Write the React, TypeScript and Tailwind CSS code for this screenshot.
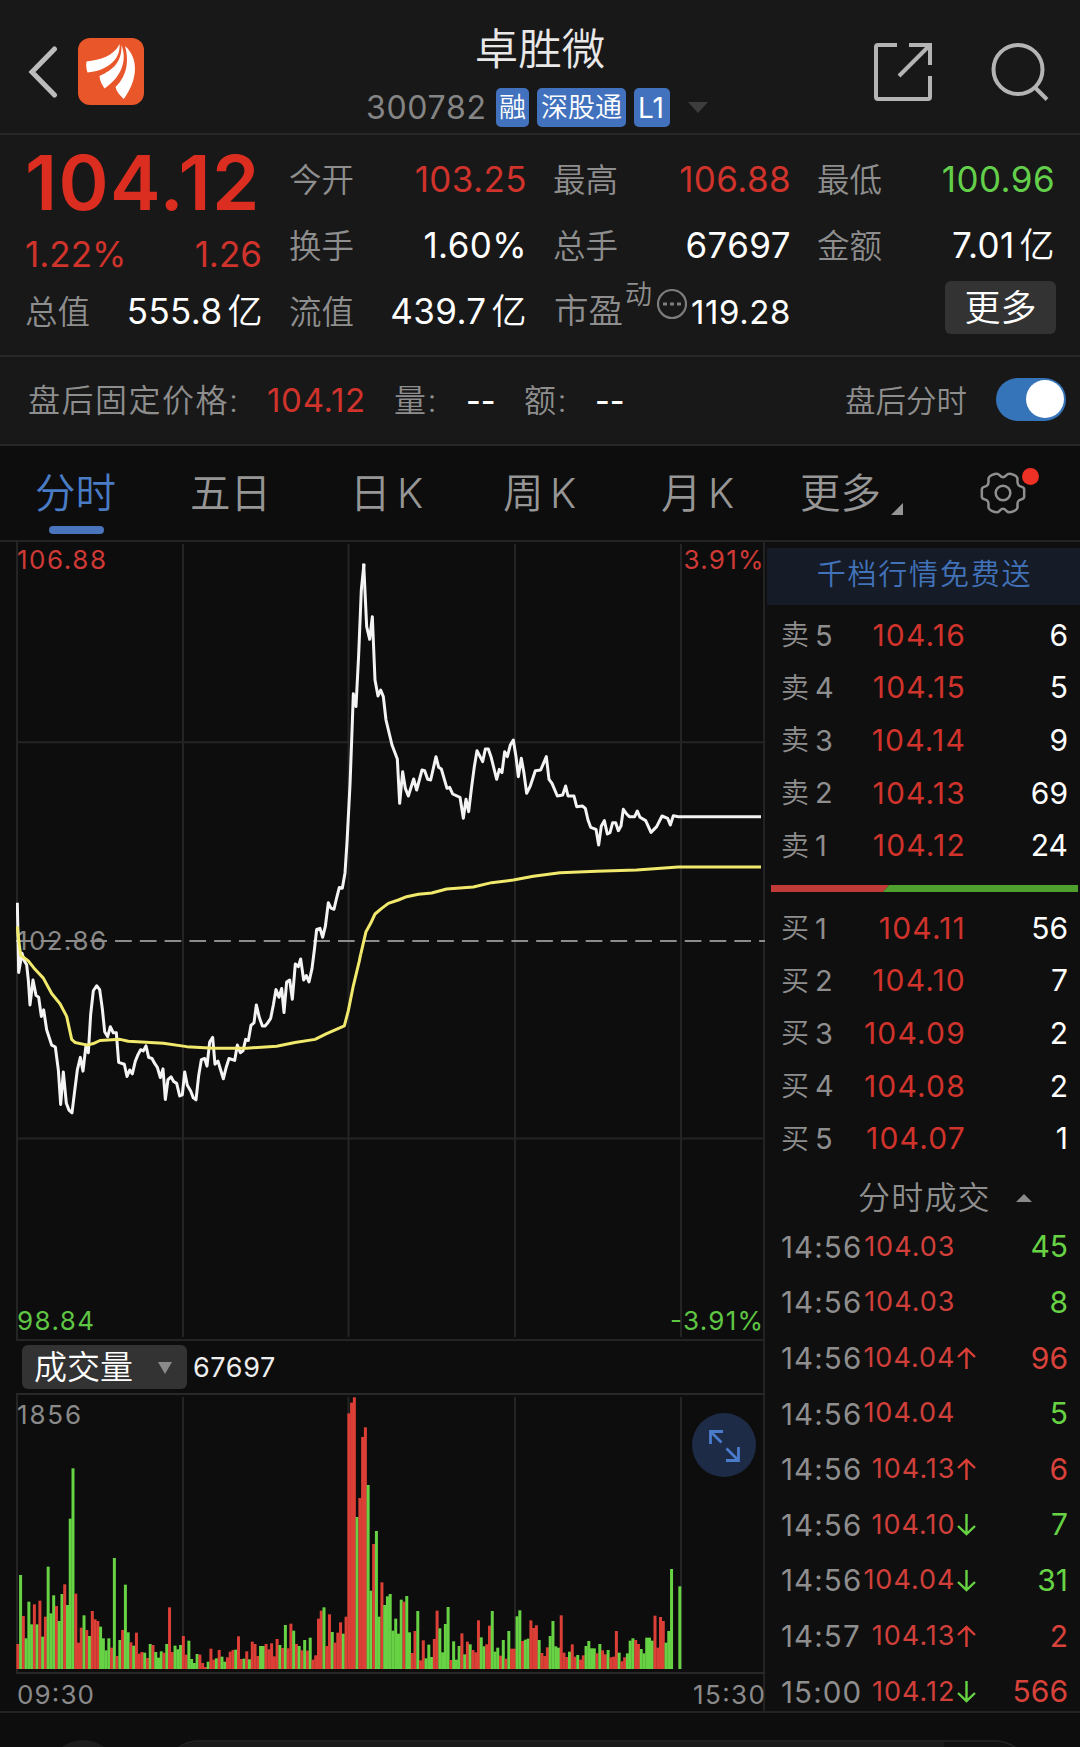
import { FC, ReactNode } from "react";

const RED = "#dc3f36";
const GREEN = "#67d344";

const priceEarly =
  "52,948 56,1130 66,1080 72,1098 80,1110 85,1150 90,1215 99,1150 108,1190 116,1195 124,1245 131,1228 140,1280 155,1320 166,1325 175,1385 182,1475 190,1390 199,1472 207,1490 216,1497 224,1440 232,1385 241,1352 249,1388 258,1320 265,1340 272,1240 280,1178 290,1165 299,1175 307,1225 314,1285 323,1298 331,1272 340,1288 349,1288 356,1365 373,1370 381,1402 389,1385 397,1395 406,1362 414,1345 422,1332 430,1335 438,1322 446,1352 456,1355 464,1368 472,1378 481,1405 489,1382 496,1462 504,1410 513,1403 521,1415 530,1420 539,1453 547,1450 554,1390 562,1425 572,1440 580,1458 588,1463 596,1400 604,1358 614,1355 621,1375 629,1312 638,1300 645,1370 654,1362 662,1385 670,1408 678,1380 687,1355 704,1360 712,1320 721,1340 729,1335 737,1305 745,1308 753,1268 762,1262 769,1215 778,1248 787,1270 795,1270 803,1262 812,1250 820,1215 828,1175 837,1195 845,1172 852,1235 860,1155 869,1150 877,1200 886,1108 895,1115 902,1095 911,1150 919,1138 927,1155 936,1120 944,1065 950,1018 960,1015 968,1038 976,1010 985,948 993,962 1002,965 1010,935 1018,908 1027,910 1035,870 1041,790 1050,640 1056,500 1060,402 1068,435 1076,300 1084,130 1092,62";
const priceLate =
  "101,71 110,260 119,298 127,230 135,420 144,468 152,450 160,470 168,540 186,615 202,657 209,790 218,695 226,745 235,768 251,717 260,750 276,690 284,692 293,718 302,720 318,650 326,682 334,687 351,745 359,742 368,762 390,772 400,835 408,778 416,815 425,740 433,680 441,632 458,665 466,627 475,627 483,650 500,718 508,688 516,698 524,635 532,650 541,615 550,600 558,650 565,710 574,655 582,700 590,760 600,740 616,692 632,690 649,650 657,718 666,730 682,768 698,765 707,738 714,768 732,768 740,800 757,798 766,805 774,840 782,862 798,868 806,915 814,858 823,842 832,882 840,878 848,848 857,848 865,872 873,858 880,808 890,822 898,830 914,830 922,813 930,832 947,842 963,877 980,860 996,828 1013,835 1021,855 1030,827 1045,830 1293,830";
const avgEarly =
  "52,1010 56,1045 62,1085 85,1100 105,1122 130,1145 155,1185 180,1212 200,1245 215,1305 225,1313 262,1320 280,1316 300,1308 360,1305 385,1310 490,1315 560,1324 640,1328 740,1328 830,1323 885,1313 945,1305 980,1290 1033,1270 1045,1230 1060,1165 1078,1100 1082,1083";
const avgLate =
  "92,1244 108,1175 122,1150 135,1122 155,1105 175,1090 205,1080 230,1070 265,1063 305,1059 350,1047 430,1041 485,1028 550,1020 610,1009 690,998 800,994 920,990 1045,981 1293,981";

// one entry per minute: direction + top of the bar, "-" is an empty minute
const volumeBars =
  "r1062 g855 r978 g1045 g935 g1003 r943 g1003 r932 g1040 r980 g830 g970 g916 r948 g993 g912 r883 g945 g686 g535 r911 r1058 r1013 g976 r1020 g1038 r963 r988 r993 g1010 g1045 g1081 g1045 r1073 g804 r1098 g1050 r1020 g884 g1027 r1057 g1067 r1028 r1091 r1086 g1088 r1104 g1062 r1065 g1086 g1103 g1084 r1088 g1062 r952 r1086 g1067 g1078 g1065 r1038 r1094 g1052 g1107 g1119 g1092 r1094 r1119 r1131 g1115 r1076 r1109 g1105 r1080 g1100 g1115 r1102 r1085 r1080 g1079 r1039 r1107 g1106 r1084 g1108 r1055 r1062 r1098 g1068 g1068 r1062 r1078 r1060 r1099 r1047 g1065 r1074 g1005 r1075 r1001 g1022 r1062 g1068 r1081 g1050 r1082 g1043 r1109 r1096 r986 r962 g952 r1068 r973 g1026 r1058 r1028 r997 g1031 r980 r370 r338 r322 g681 r624 r441 r412 g585 g902 r762 g723 g980 r877 g945 g919 g912 g1022 g986 g1031 g929 r935 g918 g1027 r1089 r1023 g963 r1111 r1051 g1105 g1064 g1101 r1047 r962 g1015 g1087 g1002 g951 r1110 g1054 g1109 g1068 r1030 g1093 r1055 g1063 r1080 r1087 r991 g1042 g1069 r1063 r1007 g963 g1085 g1073 r1097 g1050 r1106 g1023 r1076 r1076 g979 g961 r1053 g1049 g1046 r991 r1014 r1006 g1050 r1089 r1098 r1072 g1038 g993 g1069 g1073 r976 r1088 r1101 g1085 r1063 r1100 g1095 r1109 r1096 g1068 g1053 g1075 g1075 r1090 g1062 r1081 r1093 g1080 r1102 r1100 r1023 g1088 r1114 r1102 g1090 g1052 g1045 r1050 r1062 g1077 g1090 g1043 g1043 g1052 r977 r1073 r981 r993 g1058 g1023 g837 - - g889".split(" ");

const sells = [
  ["5", "104.16", "6"],
  ["4", "104.15", "5"],
  ["3", "104.14", "9"],
  ["2", "104.13", "69"],
  ["1", "104.12", "24"],
];

const buys = [
  ["1", "104.11", "56"],
  ["2", "104.10", "7"],
  ["3", "104.09", "2"],
  ["4", "104.08", "2"],
  ["5", "104.07", "1"],
];

const trades = [
  { time: "14:56", price: "104.03", dir: "", qty: "45", up: false },
  { time: "14:56", price: "104.03", dir: "", qty: "8", up: false },
  { time: "14:56", price: "104.04", dir: "up", qty: "96", up: true },
  { time: "14:56", price: "104.04", dir: "", qty: "5", up: false },
  { time: "14:56", price: "104.13", dir: "up", qty: "6", up: true },
  { time: "14:56", price: "104.10", dir: "down", qty: "7", up: false },
  { time: "14:56", price: "104.04", dir: "down", qty: "31", up: false },
  { time: "14:57", price: "104.13", dir: "up", qty: "2", up: true },
  { time: "15:00", price: "104.12", dir: "down", qty: "566", up: true },
];

const Header: FC = () => (
  <header className="flex h-[135px] shrink-0 items-start justify-between border-b-2 border-[#272727]">
    <div className="flex w-[300px] items-center gap-5 pt-[38px] pl-[28px]">
      <svg className="h-[52px] w-[30px]" viewBox="0 0 30 52" fill="none" stroke="#bcbcbc" strokeWidth="5">
        <path d="M26.5 3 4 26 26.5 49" strokeLinecap="round" />
      </svg>
      <svg className="h-[67px] w-[66px]" viewBox="0 0 66 67">
        <rect width="66" height="67" rx="12" fill="#e8562a" />
        <path fill="#fff" d="M8.5 23.5C22 22 36 18 41.5 6C43 22 28 33 9.5 34.5C8 30 8 27 8.5 23.5Z" />
        <path fill="#fff" d="M43.5 7C50 24 42 40 26.5 50.5C23.5 46 22 43 21.5 38C35 32 44 24 43.5 7Z" />
        <path fill="#fff" d="M47 8C61 20 60 42 45.7 61C41.5 57 38.5 53.5 37.5 49C47 40 52 26 47 8Z" />
      </svg>
    </div>
    <div className="flex flex-col items-center">
      <h1 className="mt-[20px] text-[43.5px] leading-[58px] font-[350] text-[#e8e8e8]">卓胜微</h1>
      <div className="mt-[10px] flex h-[39px] items-center pr-[5px] text-[27px] text-white">
        <span className="-ml-[1px] w-[130px] text-[32px] tracking-[0.7px] text-[#858585]">300782</span>
        <span className="flex h-[39px] w-[33px] items-center justify-center rounded-[5px] bg-[#4272be] pt-[2px] font-[350]">融</span>
        <span className="ml-2 flex h-[39px] w-[89px] items-center justify-center rounded-[5px] bg-[#4272be] pt-[2px] font-[350]">深股通</span>
        <span className="ml-2 flex h-[39px] w-[36px] items-center justify-center rounded-[5px] bg-[#4272be] pr-[2px] text-[28px]">L1</span>
        <svg className="ml-[18px] h-[11px] w-[20px]" viewBox="0 0 20 11">
          <path d="M0 0h20L10 11Z" fill="#3d3d3d" />
        </svg>
      </div>
    </div>
    <div className="flex w-[300px] justify-end gap-[57px] pt-[42px] pr-[30px]">
      <svg className="h-[60px] w-[60px]" viewBox="0 0 60 60" fill="none" stroke="#b4b4b4" strokeWidth="4">
        <path d="M24 3H5Q3 3 3 5V55Q3 57 5 57H55Q57 57 57 55V34M36 3H57V23M56 4 26 34" />
      </svg>
      <svg className="h-[60px] w-[60px]" viewBox="0 0 60 60" fill="none" stroke="#b4b4b4" strokeWidth="4">
        <circle cx="28" cy="27.5" r="24.5" />
        <path d="M45 45.5 57 57.5" />
      </svg>
    </div>
  </header>
);

const Stat: FC<{ label: string; color?: string; children: ReactNode }> = ({ label, color = "text-white", children }) => (
  <div className="flex items-center justify-between">
    <span className="-ml-[1px] pt-[5px] text-[32.5px] font-[350] text-[#8e8e8e]">{label}</span>
    <span className={`-mr-[1px] text-[35px] tracking-[0.4px] ${color}`}>{children}</span>
  </div>
);

const Yi: FC = () => <span className="ml-[5px] font-[350]">亿</span>;

const Quote: FC = () => (
  <section className="grid h-[222px] shrink-0 grid-cols-4 grid-rows-[66px_66px_66px] gap-x-[28px] border-b-2 border-[#272727] px-[26px] pt-[11px] [&>*]:whitespace-nowrap">
    <div className="-ml-[1px] flex items-center pt-[5px] text-[76px] leading-none font-semibold tracking-[1.4px] text-[#dc2e20]">104.12</div>
    <Stat label="今开" color="text-[#cf332b]">103.25</Stat>
    <Stat label="最高" color="text-[#cf332b]">106.88</Stat>
    <Stat label="最低" color="text-[#64cf4a]">100.96</Stat>
    <div className="-ml-[1px] flex items-center justify-between pt-[19px] text-[35px] text-[#cf332b]">
      <span>1.22%</span>
      <span>1.26</span>
    </div>
    <Stat label="换手">1.60%</Stat>
    <Stat label="总手">67697</Stat>
    <Stat label="金额">7.01<Yi /></Stat>
    <Stat label="总值">555.8<Yi /></Stat>
    <Stat label="流值">439.7<Yi /></Stat>
    <div className="flex items-center text-[#8e8e8e]">
      <span className="text-[34.5px] font-[350]">市盈</span>
      <span className="ml-[2px] -mt-[32px] text-[27px] font-[350]">动</span>
      <svg className="ml-[4px] -mt-[15px] h-[32px] w-[32px]" viewBox="0 0 32 32">
        <circle cx="16" cy="16" r="14" fill="none" stroke="#7d7d7d" strokeWidth="2.2" />
        <path d="M7 14.5h4v3H7zM14 14.5h4v3h-4zM21 14.5h4v3h-4z" fill="#7d7d7d" />
      </svg>
      <span className="-mr-[1px] ml-auto pt-[3px] text-[33px] tracking-[0.6px] text-white">119.28</span>
    </div>
    <div className="-mr-[2px] ml-auto mt-[3px] flex h-[53px] w-[111px] items-center justify-center rounded-[6px] bg-[#333] text-[36px] font-[350] text-white">更多</div>
  </section>
);

const AfterHours: FC = () => (
  <section className="flex h-[89px] shrink-0 items-center border-b-2 border-[#272727] pl-[28px] text-[32px] font-[350] whitespace-nowrap text-[#8e8e8e]">
    <span className="w-[239px] tracking-[1.5px]">盘后固定价格:</span>
    <span className="w-[127px] text-[33px] font-normal tracking-[0.7px] text-[#cf332b]">104.12</span>
    <span className="w-[72px] tracking-[1.5px]">量:</span>
    <span className="w-[58px] font-medium text-white">--</span>
    <span className="w-[71px] tracking-[1.5px]">额:</span>
    <span className="font-medium text-white">--</span>
    <span className="mr-[29px] ml-auto text-[30.5px]">盘后分时</span>
    <span className="mr-[14px] mb-[3px] flex h-[43px] w-[70px] items-center justify-end rounded-full bg-[#3574b8] pr-[2px]">
      <span className="h-[38px] w-[38px] rounded-full bg-white" />
    </span>
  </section>
);

const Tabs: FC = () => (
  <nav className="flex h-[96px] border-b-2 border-[#232323] text-[40.5px] leading-[95px] font-[350] text-[#969696]">
    <div className="flex w-[187px] flex-col pl-[35px] text-[#4a7cc6]">
      <span className="h-[80px]">分时</span>
      <span className="ml-[14px] h-[8px] w-[55px] rounded-full bg-[#4a74bb]" />
    </div>
    <span className="w-[163px] pl-[3px]">五日</span>
    <span className="w-[153px] [word-spacing:-5px]">日 K</span>
    <span className="w-[158px] [word-spacing:-5px]">周 K</span>
    <span className="w-[139px] [word-spacing:-5px]">月 K</span>
    <span className="flex w-[179px] items-center gap-[10px]">
      更多
      <svg className="mt-[31px] h-[12px] w-[12px]" viewBox="0 0 12 12">
        <path d="M12 0V12H0Z" fill="#969696" />
      </svg>
    </span>
    <div className="relative mt-[23px] h-[48px] w-[48px]">
      <svg className="h-[48px] w-[48px]" viewBox="26.5 41 144 144" fill="none" stroke="#8f8f8f" strokeWidth="7.5">
        <path d="M98.5 66C90 66 88 55 80 55C73 55 58 61 56 67C52 75 60 84 50 91C44 95 35 94 35 102V124C35 132 44 131 50 135C60 142 52 151 56 159C58 165 73 171 80 171C88 171 90 160 98.5 160C107 160 109 171 117 171C124 171 139 165 141 159C145 151 137 142 147 135C153 131 162 132 162 124V102C162 94 153 95 147 91C137 84 145 75 141 67C139 61 124 55 117 55C109 55 107 66 98.5 66Z" />
        <circle cx="98.5" cy="113" r="22" />
      </svg>
      <span className="absolute -top-[1px] left-[43px] h-[17px] w-[17px] rounded-full bg-[#ee3124]" />
    </div>
  </nav>
);

const PriceChart: FC = () => (
  <svg className="block h-[799px] w-[749px]" viewBox="16 542 749 799" fontSize="26">
    <path d="M17 542V1341M183 544V1337M348.5 544V1337M515 544V1337M681 544V1337M17 742.3H765M17 1138.5H765" stroke="#242424" strokeWidth="2" />
    <path d="M16 1340H765" stroke="#242424" strokeWidth="2" />
    <path d="M16 941H765" stroke="#8c8c8c" strokeWidth="2" strokeDasharray="16.7 8.07" />
    <text x="17" y="569" textLength="89" fill="#cf3a36">106.88</text>
    <text x="683.5" y="569" textLength="80" fill="#cf3a36">3.91%</text>
    <text x="17" y="949.5" textLength="89" fill="#8a8a8a">102.86</text>
    <text x="17" y="1330" textLength="77" fill="#5fc544">98.84</text>
    <text x="670" y="1330" textLength="93" fill="#5fc544">-3.91%</text>
    <g fill="none" strokeLinejoin="round" strokeWidth="3">
      <g stroke="#f4f4f4">
        <polyline points={priceEarly} transform="translate(0 540) scale(.33333 .38265)" vectorEffect="non-scaling-stroke" />
        <polyline points={priceLate} transform="translate(330 540) scale(.33333)" vectorEffect="non-scaling-stroke" />
      </g>
      <g stroke="#f1e96c">
        <polyline points={avgEarly} transform="translate(0 540) scale(.33333 .38265)" vectorEffect="non-scaling-stroke" />
        <polyline points={avgLate} transform="translate(330 540) scale(.33333)" vectorEffect="non-scaling-stroke" />
      </g>
    </g>
  </svg>
);

const VolumeChart: FC = () => (
  <div className="relative">
    <svg className="block h-[319px] w-[749px]" viewBox="16 1393 749 319" fontSize="26">
      <path d="M17 1393V1674M183 1397V1669M348.5 1397V1669M515 1397V1669M681 1397V1669" stroke="#242424" strokeWidth="2" />
      <path d="M16 1394H765M16 1673H765" stroke="#282828" strokeWidth="2" />
      <g transform="translate(0 1290) scale(.33333)">
        {volumeBars.map((bar, i) => {
          if (bar === "-") return null;
          const top = Number(bar.slice(1));
          return <rect key={i} x={49 + i * 8.275} y={top} width="9" height={1137 - top} fill={bar[0] === "r" ? RED : GREEN} />;
        })}
      </g>
      <text x="17" y="1423.5" textLength="64" fill="#8a8a8a">1856</text>
      <text x="17" y="1704" textLength="77" fill="#8a8a8a">09:30</text>
      <text x="693" y="1704" textLength="72" fill="#8a8a8a">15:30</text>
    </svg>
    <button className="absolute top-[20px] left-[676px] h-[64px] w-[64px] rounded-full bg-[#1d2b47]">
      <svg viewBox="0 0 64 64" fill="none" stroke="#4a7ccb" strokeWidth="2.8">
        <path d="M31 18.5H18.5V31M19 19 29.5 29.5M34 47.5H46.5V34M46 47 34.5 35.5" />
      </svg>
    </button>
  </div>
);

const Level: FC<{ side: string; row: string[] }> = ({ side, row }) => (
  <div className="flex h-[52.6px] items-center text-[30px]">
    <span className="-ml-[1px] w-[34px] text-[28px] font-[350] text-[#8e8e8e]">{side}</span>
    <span className="w-[40px] text-[29px] text-[#8e8e8e]">{row[0]}</span>
    <span className="w-[111px] text-right tracking-[1.2px] text-[#cf332b]">{row[1]}</span>
    <span className="ml-auto text-white">{row[2]}</span>
  </div>
);

const OrderBook: FC = () => (
  <aside className="w-[315px] bg-[#0f0f0f] pl-[2px]">
    <div className="mt-[6px] flex h-[57px] items-center justify-center bg-[#151c28] pb-[3px] pl-[2px] text-[29px] font-[350] tracking-[1.8px] text-[#4272b8]">千档行情免费送</div>
    <div className="pt-[4px] pr-[12px] pl-[15px]">
      {sells.map((row) => <Level key={row[0]} side="卖" row={row} />)}
    </div>
    <svg className="mt-[13px] ml-[4px] block h-[7px] w-[307px]" viewBox="0 0 307 7">
      <path d="M0 0H118L112 7H0Z" fill="#c03b38" />
      <path d="M118 0H307V7H112Z" fill="#4f9f2f" />
    </svg>
    <div className="pt-[10px] pr-[12px] pl-[15px]">
      {buys.map((row) => <Level key={row[0]} side="买" row={row} />)}
    </div>
    <div className="flex h-[54px] items-center pt-[13px] pl-[91px] text-[32px] font-[350] tracking-[1.2px] text-[#8e8e8e]">
      分时成交
      <svg className="ml-[25px] h-[8px] w-[16px]" viewBox="0 0 16 8">
        <path d="M0 8H16L8 0Z" fill="#8a8a8a" />
      </svg>
    </div>
    <div className="pr-[12px] pl-[14px]">
      {trades.map((t, i) => (
        <div key={i} className="flex h-[55.65px] items-center text-[30px]">
          <span className="w-[81px] text-[29.5px] tracking-[1.1px] text-[#8e8e8e]">{t.time}</span>
          <span className="w-[93.5px] text-right text-[27px] tracking-[1px] text-[#d03f3a]">{t.price}</span>
          <svg className="ml-[1.5px] h-[22px] w-[19px]" viewBox="0 0 19 22" fill="none" strokeWidth="2.4">
            {t.dir === "up" && <path d="M9.5 22V2M1 10 9.5 1.8 18 10" stroke={RED} />}
            {t.dir === "down" && <path d="M9.5 0V20M1 12 9.5 20.2 18 12" stroke={GREEN} />}
          </svg>
          <span className={t.up ? "ml-auto text-[#d8423a]" : "ml-auto text-[#67d344]"}>{t.qty}</span>
        </div>
      ))}
    </div>
  </aside>
);

export default function App() {
  return (
    <main className="flex h-[1747px] w-[1080px] flex-col overflow-hidden bg-[#181818] font-[Inter,'Noto_Sans_CJK_SC',sans-serif]">
      <Header />
      <Quote />
      <AfterHours />
      <div className="shrink-0 bg-[#0d0d0d]">
        <Tabs />
        <div className="flex h-[1171px] border-b-2 border-[#232323]">
          <div className="w-[765px] border-r-2 border-[#232323] pl-4">
            <PriceChart />
            <div className="flex h-[52px] items-center pl-[6px]">
              <div className="flex h-[44px] w-[165px] items-center justify-between rounded-[6px] bg-[#333] pt-[1px] pr-[15px] pl-[12px] text-[33px] font-[350] text-white">
                成交量
                <svg className="h-[12px] w-[14px]" viewBox="0 0 14 12">
                  <path d="M0 0H14L7 12Z" fill="#8a8a8a" />
                </svg>
              </div>
              <span className="ml-[6px] pt-[3px] text-[27px] tracking-[0.6px] text-[#eee]">67697</span>
            </div>
            <VolumeChart />
          </div>
          <OrderBook />
        </div>
        <footer className="flex h-[34px] items-start overflow-hidden pt-[27px] pl-[48px]">
          <span className="h-[70px] w-[70px] shrink-0 rounded-full bg-[#1c1c1c]" />
          <span className="ml-[46px] flex h-[70px] w-[866px] shrink-0 overflow-hidden rounded-[35px] border-2 border-[#202020] bg-[#111]">
            <span className="h-full w-[778px] bg-[#1a1a1a]" />
          </span>
        </footer>
      </div>
    </main>
  );
}
